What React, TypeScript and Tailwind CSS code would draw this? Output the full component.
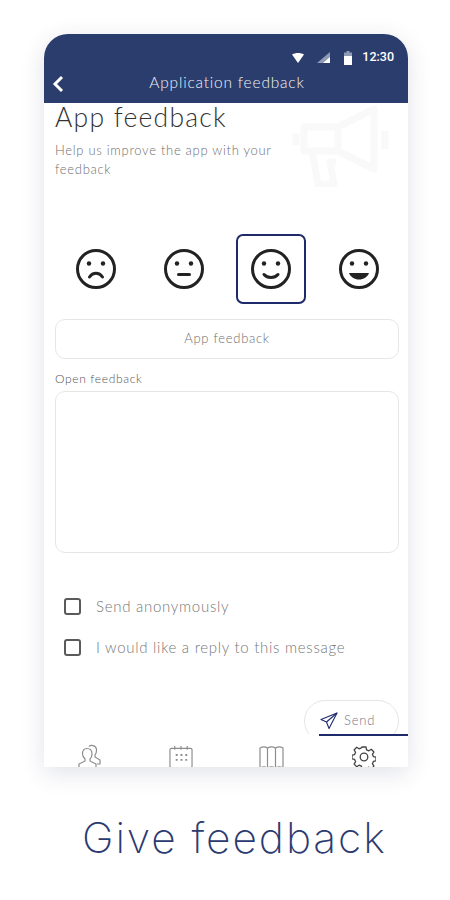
import React from "react";

const Face = ({ mood }: { mood: "sad" | "flat" | "smile" | "happy" }) => (
  <svg width="42" height="42" viewBox="0 0 42 42" fill="none" stroke="#222" strokeWidth="3" strokeLinecap="round">
    <circle cx="21" cy="21" r="18.500" />
    <circle cx="14" cy="15.500" r="2.200" fill="#222" stroke="none" />
    <circle cx="28" cy="15.500" r="2.200" fill="#222" stroke="none" />
    {mood === "sad" && <path d="M14.500 29c1.800-2.600 3.900-3.700 6.500-3.700s4.700 1.100 6.500 3.700" />}
    {mood === "flat" && <path d="M15.500 26.500h11" />}
    {mood === "smile" && <path d="M14 26.500c1.800 2.100 4.200 3 7 3s5.200-.9 7-3" />}
    {mood === "happy" && <path d="M11 25h20c-1.500 4-5.500 6.500-10 6.500s-8.500-2.500-10-6.500z" fill="#222" stroke="none" />}
  </svg>
);

const Megaphone = () => (
  <svg width="100" height="82" viewBox="0 0 100 82" fill="none" stroke="#f9f9fa" strokeWidth="7" strokeLinejoin="round">
    <path d="M12 22h34L82 4v60L46 46H12z" />
    <path d="M46 22v24" />
    <path d="M4 28v12M93 26v18" />
    <path d="M20 46l6 33h16l-4-22h6" />
  </svg>
);

const Checkbox = ({ label }: { label: string }) => (
  <div className="flex items-center gap-[15px]">
    <span className="w-[17px] h-[17px] rounded-[3px] border-2 border-[#5a5a5a]" />
    <span className="text-[15px] leading-[20px] text-[#777] font-light tracking-[0.72px] whitespace-nowrap">{label}</span>
  </div>
);

const navIcon = "#8d8d8d";

const App = () => {
  return (
    <div className="w-[450px] h-[900px] bg-white overflow-hidden font-['Lato',sans-serif]">
      <div className="ml-[44px] mt-[34px] w-[364px] h-[733px] flex flex-col overflow-hidden rounded-t-[24px] bg-white shadow-[0_6px_24px_rgba(40,50,90,0.14)] relative">
        {/* header */}
        <div className="h-[69px] bg-[#2b3d6d] shrink-0 text-white relative">
          <div className="flex items-center justify-end pt-[15px] pr-[14px] h-[32px]">
            <svg width="12" height="10" viewBox="0 0 12 10" fill="#fff">
              <path d="M0 1.500C3.500-.5 8.500-.5 12 1.500L6 10z" />
            </svg>
            <svg width="13" height="11" viewBox="0 0 13 11" className="ml-[13px]">
              <path d="M13 0v11H0z" fill="#8f9ab5" />
              <path d="M13 5v6H6z" fill="#fff" />
            </svg>
            <svg width="8" height="14" viewBox="0 0 8 14" className="ml-[14px]">
              <path d="M2.500 0h3v1.500H8V14H0V1.500h2.500z" fill="#8f9ab5" />
              <path d="M0 5h8v9H0z" fill="#fff" />
            </svg>
            <span className="ml-[10px] text-[12.500px] font-medium font-['Roboto',sans-serif]">12:30</span>
          </div>
          <div className="flex items-center justify-center h-[33px] pl-[2px] relative">
            <svg width="14" height="18" viewBox="0 0 14 18" fill="none" stroke="#fff" strokeWidth="3" className="absolute left-[7px] top-[9px]">
              <path d="M11 2L4 9l7 7" />
            </svg>
            <span className="text-[15.500px] font-light tracking-[0.8px] text-[#f0f2f8]">Application feedback</span>
          </div>
        </div>

        {/* form */}
        <div className="flex-1 pl-[11px] pr-[9px] relative">
          <div className="absolute right-[16px] top-[2px]">
            <Megaphone />
          </div>
          <h1 className="text-[26.500px] leading-[28px] font-light tracking-[1.250px] text-[#333] relative">App feedback</h1>
          <p className="mt-[10px] w-[240px] text-[13px] leading-[19px] font-light tracking-[0.7px] text-[#6f6f6f] relative">
            Help us improve the app with your feedback
          </p>

          <div className="mt-[55px] ml-[6px] flex gap-[17.500px]">
            <div className="w-[70px] h-[70px] flex items-center justify-center"><Face mood="sad" /></div>
            <div className="w-[70px] h-[70px] flex items-center justify-center"><Face mood="flat" /></div>
            <div className="w-[70px] h-[70px] flex items-center justify-center rounded-[7px] border-2 border-[#1f2a6b]"><Face mood="smile" /></div>
            <div className="w-[70px] h-[70px] flex items-center justify-center"><Face mood="happy" /></div>
          </div>

          <div className="mt-[15px] h-[40px] rounded-[10px] border border-[#e6e6e6] flex items-center justify-center text-[13px] font-light tracking-[0.7px] text-[#6f6f6f]">
            App feedback
          </div>
          <p className="mt-[12px] text-[12px] leading-[16px] font-light tracking-[0.65px] text-[#555]">Open feedback</p>
          <div className="mt-[4px] h-[162px] rounded-[10px] border border-[#e6e6e6]" />

          <div className="mt-[43px] ml-[9px] flex flex-col gap-[21px]">
            <Checkbox label="Send anonymously" />
            <Checkbox label="I would like a reply to this message" />
          </div>
        </div>

        {/* send */}
        <div className="flex justify-end pr-[9px] -mb-[8px] shrink-0">
          <div className="w-[95px] h-[42px] rounded-full border border-[#e6e6e6] flex items-center gap-[6px] pl-[15px] py-[6px] text-[13px] font-light tracking-[0.8px] text-[#777788]">
            <svg width="18" height="18" viewBox="0 0 18 18" fill="none" stroke="#1f2a6b" strokeWidth="1.100" strokeLinejoin="round">
              <path d="M17 1L1 7.500l5.500 2.500L9 16.500z" />
              <path d="M17 1L6.500 10" />
            </svg>
            Send
          </div>
        </div>

        {/* bottom nav */}
        <div className="h-[33px] shrink-0 grid grid-cols-4 bg-white relative">
          <div className="flex justify-center pt-[10px]">
            <svg width="26" height="26" viewBox="0 0 26 26" fill="none" stroke={navIcon} strokeWidth="1.200">
              <path d="M10 4.500c3.400 0 5 2.500 5 5.500 0 2.300-1 4-2 5v2l6 3v5H2v-5l6-3v-2c-1-1-2.500-2.700-2.500-5 0-3 1.100-5.500 4.500-5.500z" />
              <path d="M12 2.500c1-1.500 7-2 7.500 3 .2 2.500-.5 4-1.500 5.500v2l5 3v4h-3" />
            </svg>
          </div>
          <div className="flex justify-center pt-[11px]">
            <svg width="24" height="24" viewBox="0 0 25 24" fill="none" stroke={navIcon} strokeWidth="1.200">
              <rect x="1" y="3" width="23" height="20" rx="1.500" />
              <path d="M6 .5v4M12.500 .5v4M19 .5v4" />
              <path d="M7 10h2M12 10h2M17 10h2M7 15h2M12 15h2M17 15h2" strokeWidth="2" />
            </svg>
          </div>
          <div className="flex justify-center pt-[11px]">
            <svg width="25" height="24" viewBox="0 0 25 24" fill="none" stroke={navIcon} strokeWidth="1.200">
              <path d="M1 3c3-1.500 5-1.500 7.500 0 2.500-1.500 5.500-1.500 8 0 2.500-1.500 5-1.500 7.500 0v20c-2.500-1.500-5-1.500-7.500 0-2.500-1.500-5.500-1.500-8 0-2.500-1.500-4.500-1.500-7.500 0z" />
              <path d="M8.500 3v20M16.500 3v20" />
            </svg>
          </div>
          <div className="flex justify-center pt-[9px] ml-[2px] border-t-2 border-[#1f2a6b]">
            <svg width="24" height="24" viewBox="0 0 24 24" fill="none" stroke="#444" strokeWidth="1.300" strokeLinejoin="round">
              <path d="M10 2h4l.6 2.800 2.300 1 2.400-1.500 2.600 2.700-1.500 2.300 1 2.300 2.600.6v3.600l-2.600.6-1 2.300 1.500 2.400-2.600 2.600-2.400-1.500-2.300 1L14 24h-4l-.6-2.800-2.300-1-2.400 1.500-2.600-2.600 1.500-2.400-1-2.300L0 13.800v-3.600l2.600-.6 1-2.300L2.100 5l2.600-2.700 2.400 1.500 2.300-1z" />
              <circle cx="12" cy="12" r="3.800" />
            </svg>
          </div>
        </div>
      </div>

      <p className="mt-[43px] ml-[82px] text-[42.500px] leading-[56px] font-['Inter',sans-serif] font-extralight tracking-[1.900px] text-[#2b3a70] whitespace-nowrap">
        Give feedback
      </p>
    </div>
  );
};

export default App;
